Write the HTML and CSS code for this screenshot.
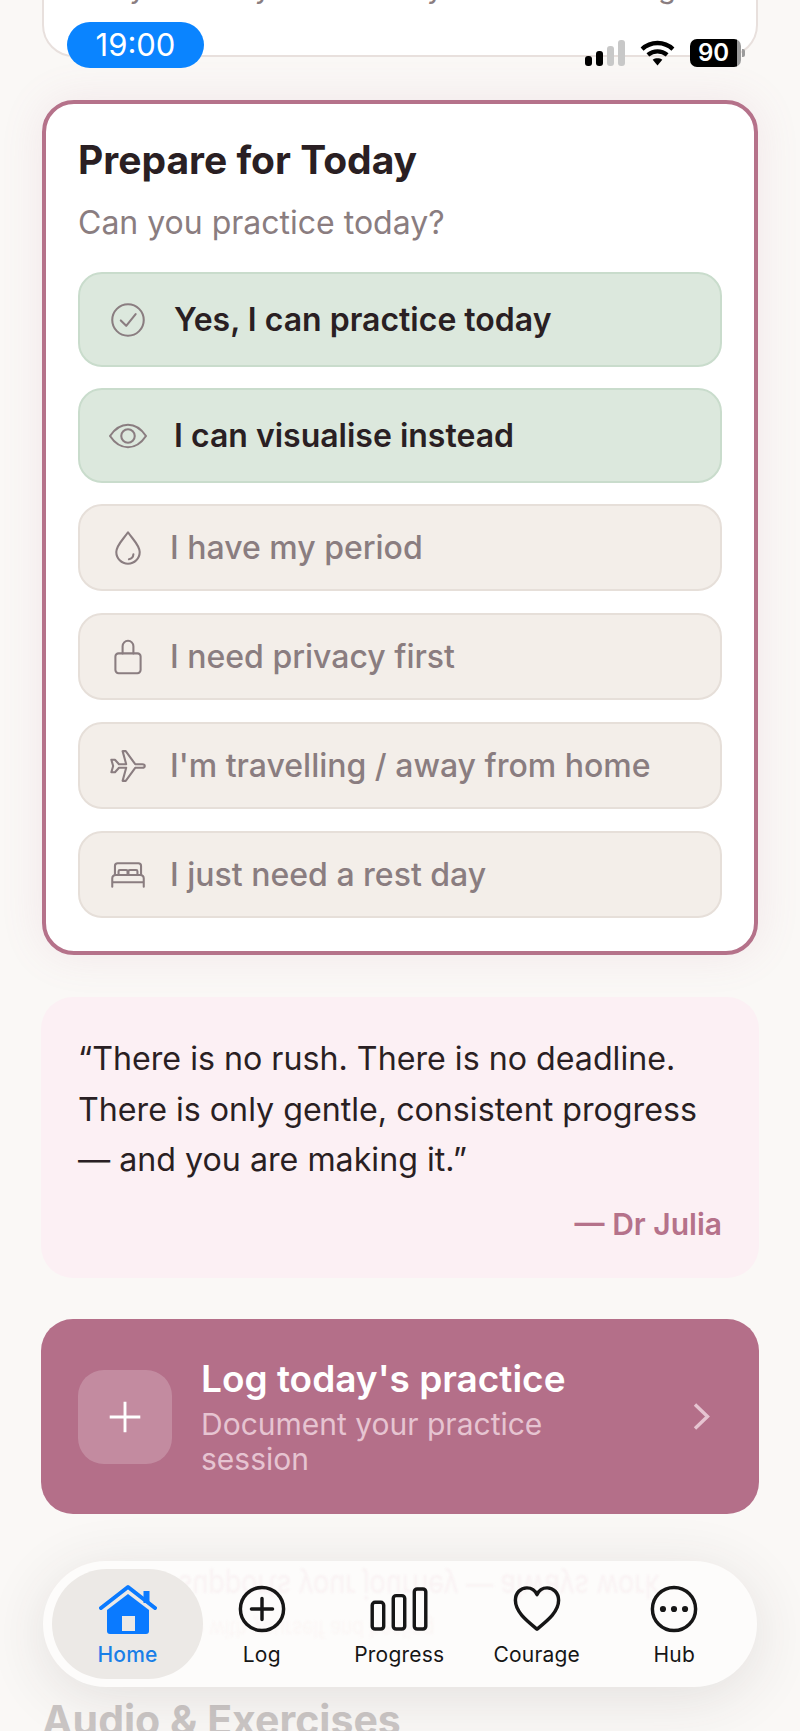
FILE: index.html
```html
<!DOCTYPE html>
<html lang="en">
<head>
    <meta charset="UTF-8">
    <meta name="viewport" content="width=device-width, initial-scale=1.0">
    <title>Prepare for Today</title>
    <link rel="stylesheet" href="styles.css">
</head>
<body>
    <div id="page">
        <div class="card prev-card">
            <p class="prev-text">Every minute you are ready for the next stage.</p>
        </div>

        <section class="card prepare">
            <h2>Prepare for Today</h2>
            <p class="sub">Can you practice today?</p>

            <div class="option yes">
                <svg class="opt-icon" viewBox="0 0 40 40"><circle cx="20" cy="20" r="17.500"/><path d="M12 20.500l6 6 10.500-13"/></svg>
                <span>Yes, I can practice today</span>
            </div>
            <div class="option yes">
                <svg class="opt-icon" viewBox="0 0 40 40"><path d="M0 20C6 11 13 7.500 20 7.500S34 11 40 20C34 29 27 32.500 20 32.500S6 29 0 20z"/><circle cx="20" cy="20" r="7.500"/></svg>
                <span>I can visualise instead</span>
            </div>
            <div class="option">
                <svg class="opt-icon" viewBox="0 0 40 40"><path d="M20 2.500C15 10 7 17 7 24.500a13 13 0 0 0 26 0C33 17 25 10 20 2.500z"/><path d="M26 27a6 6 0 0 1-5 5.500"/></svg>
                <span>I have my period</span>
            </div>
            <div class="option">
                <svg class="opt-icon" viewBox="0 0 40 40"><rect x="6" y="16" width="28" height="22" rx="3.500"/><path d="M14 16V8a6 6 0 0 1 12 0v8"/></svg>
                <span>I need privacy first</span>
            </div>
            <div class="option">
                <svg class="opt-icon" viewBox="0 0 40 40"><path d="M1.500 13l4 0 4.500 5 8 0L14 3.500h3.500L28 18l8 0c3.500 0 3.500 4 0 4l-8 0-10.500 14.500H14L18 22l-8 0-4.500 5-4 0 2-7z"/></svg>
                <span>I'm travelling / away from home</span>
            </div>
            <div class="option">
                <svg class="opt-icon" viewBox="0 0 40 40"><path d="M5.500 20V10c0-2 1.500-3 3-3h23c1.500 0 3 1 3 3v10"/><path d="M9.500 20v-4c0-1 .5-1.500 1.500-1.500h7c1 0 1.500 .5 1.500 1.500v4M20.500 20v-4c0-1 .5-1.500 1.500-1.500h7c1 0 1.500 .5 1.500 1.500v4"/><path d="M2.500 33V24c0-2.500 1.500-4 4-4h27c2.500 0 4 1.500 4 4v9M2.500 28h35"/></svg>
                <span>I just need a rest day</span>
            </div>
        </section>

        <section class="quote">
            <p>“There is no rush. There is no deadline. There is only gentle, consistent progress — and you are making it.”</p>
            <p class="by">— Dr Julia</p>
        </section>

        <section class="log">
            <div class="log-icon">
                <svg viewBox="0 0 40 40"><path d="M20 2v36M2 20h36"/></svg>
            </div>
            <div class="log-text">
                <h3>Log today's practice</h3>
                <p>Document your practice session</p>
            </div>
            <svg class="chev" viewBox="0 0 17 27"><path d="M2 1.500l12.500 12-12.500 12"/></svg>
        </section>

        <h2 class="audio">Audio &amp; Exercises</h2>
    </div>

    <div class="status">
        <span class="time">19:00</span>
        <div class="status-right">
            <svg class="signal" viewBox="0 0 40 26"><rect x="0" y="16" width="7" height="10" rx="3"/><rect x="11" y="11" width="7" height="15" rx="3"/><rect class="off" x="22" y="6" width="7" height="20" rx="3"/><rect class="off" x="33" y="0" width="7" height="26" rx="3"/></svg>
            <svg class="wifi" viewBox="0 0 36 27"><path d="M2 9.500C11 1 25 1 34 9.500"/><path d="M8 15.500c6-5 14-5 20 0"/><path class="wifi-dot" d="M13 20.500c3-2 7-2 10 0l-5 6z"/></svg>
            <span class="batt">90</span>
        </div>
    </div>

    <nav class="tabbar">
        <p class="reflect reflect-one">supports your journey — always work</p>
        <p class="reflect reflect-two">gentle with yourself and healing</p>
        <div class="tab home">
            <svg viewBox="0 0 58 52"><path class="fill" d="M8 26L29 10l21 16v21a3 3 0 0 1-3 3H11a3 3 0 0 1-3-3z"/><rect class="hole" x="23" y="32" width="13" height="15"/><rect class="fill" x="44.500" y="7" width="6" height="12"/><path class="roof" d="M2 24L29 3l27 21"/></svg>
            <span>Home</span>
        </div>
        <div class="tab">
            <svg viewBox="0 0 50 50"><circle cx="25" cy="25" r="22.500"/><path d="M25 14v22M14 25h22"/></svg>
            <span>Log</span>
        </div>
        <div class="tab">
            <svg class="bars" viewBox="0 0 60 46"><rect x="2" y="16" width="12" height="28" rx="3"/><rect x="24" y="9" width="12" height="35" rx="3"/><rect x="46" y="2" width="12" height="42" rx="3"/></svg>
            <span>Progress</span>
        </div>
        <div class="tab">
            <svg viewBox="0 0 50 50"><path d="M25 46C14 37 2.500 28 2.500 16 2.500 8 8 3 14.500 3 19 3 23 5.500 25 10 27 5.500 31 3 35.500 3 42 3 47.500 8 47.500 16 47.500 28 36 37 25 46z"/></svg>
            <span>Courage</span>
        </div>
        <div class="tab">
            <svg viewBox="0 0 50 50"><circle cx="25" cy="25" r="22.500"/><circle class="dot" cx="13.500" cy="25" r="3.200"/><circle class="dot" cx="25" cy="25" r="3.200"/><circle class="dot" cx="36.500" cy="25" r="3.200"/></svg>
            <span>Hub</span>
        </div>
    </nav>
</body>
</html>
```

FILE: styles.css
```css
* {
    box-sizing: border-box;
}
html, body {
    margin: 0;
    height: 100%;
    overflow: hidden;
}
body {
    position: relative;
    background: #faf8f6;
    font-family: Inter, "Liberation Sans", sans-serif;
    color: #2a1f23;
}
p, h2, h3 {
    margin: 0;
}
#page {
    padding: 0 42px;
    display: flex;
    flex-direction: column;
}
.card {
    background: #fff;
    border-radius: 32px;
}
.prev-card {
    height: 100px;
    margin-top: -43px;
    border: 2px solid #e8e0dd;
    padding: 11px 24px;
}
.prev-text {
    font-size: 29px;
    color: #8a7d80;
    white-space: nowrap;
    overflow: hidden;
}
.prepare {
    margin-top: 43px;
    height: 855px;
    border: 4px solid #b5728a;
    padding: 32px 32px;
    display: flex;
    flex-direction: column;
    box-shadow: 0 0 44px rgba(181, 111, 136, 0.12);
}
.prepare h2 {
    font-size: 39px;
    line-height: 48px;
    font-weight: 700;
    color: #2a1f23;
}
.sub {
    font-size: 32px;
    line-height: 40px;
    color: #8a7d80;
    margin-top: 19px;
    margin-bottom: 29px;
}
.option {
    display: flex;
    align-items: center;
    flex: none;
    height: 87px;
    margin-bottom: 22px;
    padding-left: 30px;
    background: #f3eee9;
    border: 2px solid #e6dfd9;
    border-radius: 24px;
    font-size: 32px;
    font-weight: 500;
    color: #8a7d80;
}
.option.yes {
    height: 95px;
    margin-bottom: 21px;
    background: #dce8dd;
    border-color: #c9dccc;
    color: #2a1f23;
    font-weight: 600;
}
.opt-icon {
    width: 36px;
    height: 36px;
    margin-right: 24px;
    flex: none;
    fill: none;
    stroke: #8a7d80;
    stroke-width: 2.300;
    stroke-linejoin: round;
    stroke-linecap: round;
    overflow: visible;
}
.yes .opt-icon {
    margin-right: 28px;
}
.quote {
    margin: 42px -1px 0;
    height: 281px;
    background: #fcf0f4;
    border-radius: 32px;
    padding: 37px 37px;
    font-size: 32.200px;
    line-height: 50.500px;
}
.by {
    text-align: right;
    font-size: 30px;
    font-weight: 600;
    color: #b5728a;
    margin-top: 18px;
    line-height: 40px;
}
.log {
    margin: 41px -1px 0;
    height: 195px;
    background: #b46f89;
    border-radius: 32px;
    display: flex;
    align-items: center;
    padding: 0 49px 0 37px;
    color: #fff;
}
.log-icon {
    width: 94px;
    height: 94px;
    border-radius: 26px;
    background: rgba(255, 255, 255, 0.2);
    display: flex;
    align-items: center;
    justify-content: center;
    flex: none;
}
.log-icon svg {
    width: 34px;
    height: 34px;
    fill: none;
    stroke: #fff;
    stroke-width: 3.400;
}
.log-text {
    flex: 1;
    margin-left: 29px;
    padding-right: 80px;
}
.log-text h3 {
    font-size: 37px;
    line-height: 44px;
    font-weight: 600;
    margin-bottom: 6px;
}
.log-text p {
    font-size: 30px;
    line-height: 35px;
    color: #e6c4d1;
}
.chev {
    width: 17px;
    height: 27px;
    fill: none;
    stroke: #e6c4d1;
    stroke-width: 3.400;
    flex: none;
}
.audio {
    margin-top: 181px;
    font-size: 41px;
    font-weight: 700;
    line-height: 50px;
    color: #cbc6c5;
    white-space: nowrap;
}

/* status bar lies over the page */
.status {
    position: absolute;
    left: 67px;
    right: 55px;
    top: 22px;
    display: flex;
    justify-content: space-between;
}
.time {
    width: 137px;
    height: 46px;
    border-radius: 23px;
    background: #0a84ff;
    color: #fff;
    font-size: 31px;
    line-height: 46px;
    text-align: center;
}
.status-right {
    display: flex;
    align-items: center;
    gap: 15px;
    margin-top: 17px;
    height: 28px;
}
.signal {
    width: 40px;
    height: 26px;
}
.signal rect {
    fill: #000;
}
.signal rect.off {
    fill: #c8c8c8;
}
.wifi {
    width: 35px;
    height: 26px;
    fill: none;
    stroke: #000;
    stroke-width: 4.500;
}
.wifi-dot {
    fill: #000;
    stroke: none;
}
.batt {
    position: relative;
    width: 51px;
    height: 28px;
    margin-right: 4px;
    border-radius: 7px;
    background: linear-gradient(to right, #000 92%, #9b9b9b 92%);
    color: #fff;
    font-size: 24px;
    font-weight: 600;
    line-height: 28px;
    padding-right: 4px;
    text-align: center;
}
.batt::after {
    content: "";
    position: absolute;
    right: -4px;
    top: 10px;
    width: 3px;
    height: 8px;
    border-radius: 0 2px 2px 0;
    background: #9b9b9b;
}

/* floating tab bar */
.tabbar {
    position: absolute;
    left: 43px;
    top: 1561px;
    width: 714px;
    height: 126px;
    border-radius: 63px;
    background: #fdfcfb;
    box-shadow: 0 10px 60px rgba(60, 50, 50, 0.12);
    display: flex;
    align-items: center;
    padding: 0 9px;
    overflow: hidden;
}
.reflect {
    position: absolute;
    transform: scale(1, -1.2);
    white-space: nowrap;
    color: #f9f2f3;
    font-size: 27px;
    line-height: 30px;
    left: 135px;
    top: 10px;
    filter: blur(0.8px);
}
.reflect-two {
    top: 57px;
    font-size: 19px;
    line-height: 20px;
    left: 105px;
    color: #fbf6f5;
}
.tab {
    position: relative;
    flex: none;
    width: 137.500px;
    height: 110px;
    display: flex;
    flex-direction: column;
    align-items: center;
    font-size: 21px;
    letter-spacing: 0.2px;
    color: #161616;
    padding-top: 16px;
}
.tab svg {
    width: 48px;
    height: 48px;
    flex: none;
    fill: none;
    stroke: #161616;
    stroke-width: 3.600;
    stroke-linejoin: round;
    stroke-linecap: round;
}
.tab span {
    margin-top: 9px;
    line-height: 26px;
}
.tab .dot {
    fill: #161616;
    stroke: none;
}
.tab .bars {
    width: 60px;
    height: 44px;
    margin: 2px 0;
}
.home {
    width: 151px;
    margin-right: -10px;
    border-radius: 55px;
    background: #ece9e6;
    color: #1a7fe8;
    font-weight: 500;
    padding-top: 15px;
}
.home svg {
    width: 58px;
    height: 52px;
    stroke: none;
}
.home span {
    margin-top: 6px;
}
.home .fill {
    fill: #0a7aff;
}
.home .hole {
    fill: #ece9e6;
}
.home .roof {
    fill: none;
    stroke: #0a7aff;
    stroke-width: 4;
}
```
